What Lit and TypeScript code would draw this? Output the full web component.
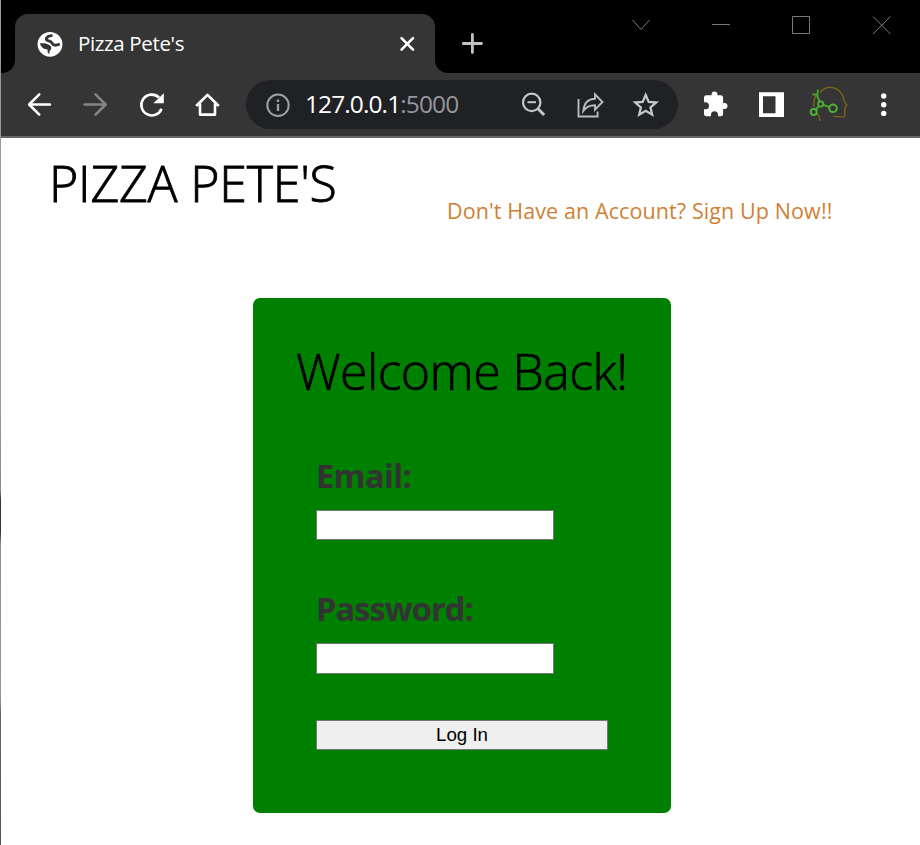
import { LitElement, html, css, svg } from "lit";
import { customElement, property, state } from "lit/decorators.js";

// Glyphs are drawn on a 56x48 tile centred on (28, 24).
const glyphs: Record<string, unknown> = {
  back: svg`<path d="M39 24.5H18.8M28.3 14.3 18.1 24.5 28.3 34.7" fill="none" stroke="#fff" stroke-width="2.5" stroke-linecap="round" stroke-linejoin="round"/>`,
  forward: svg`<path d="M17.5 24.5H38M28.5 14.3 38.7 24.5 28.5 34.7" fill="none" stroke="#858585" stroke-width="2.5" stroke-linecap="round" stroke-linejoin="round"/>`,
  reload: svg`<path d="M38.5 28.7A10.4 10.4 0 1 1 36 17.5" fill="none" stroke="#fff" stroke-width="2.6"/><path d="M40.8 13.2V23.3H30.4z" fill="#fff"/>`,
  home: svg`<path d="M17.2 26 28.5 14.8 39.8 26M21 23.5V34.6H36V23.5" fill="none" stroke="#fff" stroke-width="2.6" stroke-linejoin="round"/>`,
  zoomOut: svg`<circle cx="26.7" cy="21.4" r="8.7" fill="none" stroke="#c4c6c9" stroke-width="2.2"/><path d="M22.5 21.2H31" stroke="#c4c6c9" stroke-width="2"/><path d="M33 27.8 39.2 34" stroke="#c4c6c9" stroke-width="3"/>`,
  share: svg`<path d="M17.5 18V35.5H36.6V30.5" fill="none" stroke="#b9bbbf" stroke-width="1.9"/><path d="M22.3 30C23 22 27.6 17.9 34 17.7V13.3L41.5 21 34 28.6V24.2C28.5 24.2 25 26 22.3 30Z" fill="none" stroke="#b9bbbf" stroke-width="1.9" stroke-linejoin="miter"/>`,
  star: svg`<path d="M28.7 14 31.7 20.9 39.2 21.5 33.5 26.4 35.2 33.7 28.7 29.8 22.2 33.7 23.9 26.4 18.2 21.5 25.7 20.9Z" fill="none" stroke="#c4c6c9" stroke-width="2.3"/>`,
  puzzle: svg`<path transform="translate(.8 .3)" d="M36.8 22.8H35.3V17.3a2.4 2.4 0 0 0-2.4-2.4H29.6V14a2.9 2.9 0 0 0-5.8 0v.9H18.6a2.4 2.4 0 0 0-2.4 2.4v4.6h1.5a3.5 3.5 0 0 1 0 7H16.2v4.7a2.4 2.4 0 0 0 2.4 2.4h4.6V34.5a3.5 3.5 0 0 1 7 0V36h2.7a2.4 2.4 0 0 0 2.4-2.4V28.6h1.5a2.9 2.9 0 0 0 0-5.8Z" fill="#fff"/>`,
  panel: svg`<path d="M16 12.3H41V37H16ZM20 16.3V33.3H32.5V16.3Z" fill="#fff" fill-rule="evenodd"/>`,
  head: svg`<g fill="none"><path d="M21 12.5C27 5 38 5.5 43.5 15 44.8 17.5 44 19 45 20.5L47.8 25.3 45.8 27.5V35.5Q45.5 38 34.5 36.2M17 15.5C15 19 14.5 24 15.2 27M18 34C20.5 35.5 21 38 20.8 41" stroke="#7c6a18" stroke-width="1.3"/><path d="M17.5 14.5 21.7 24 34 28.3M21.7 24 14.7 32M13.5 14.2 18.5 15 18.9 9.5" stroke="#47a52f" stroke-width="1.9"/><circle cx="21.7" cy="24" r="2.6" fill="#353535" stroke="#4db433" stroke-width="1.7"/><circle cx="34" cy="28.3" r="3.8" fill="#353535" stroke="#4db433" stroke-width="2"/><circle cx="14.7" cy="32" r="3" fill="#353535" stroke="#4db433" stroke-width="1.9"/></g>`,
  dots: svg`<g fill="#fff"><circle cx="28.7" cy="16" r="2.7"/><circle cx="28.7" cy="24.7" r="2.7"/><circle cx="28.7" cy="33.4" r="2.7"/></g>`,
};

@customElement("tool-icon")
class ToolIcon extends LitElement {
  @property() name = "";
  static styles = css`
    :host { display: block; flex: none; width: 56px; height: 48px; }
    svg { display: block; overflow: visible; }
  `;
  render() {
    return html`<svg width="56" height="48" viewBox="0 0 56 48">${glyphs[this.name]}</svg>`;
  }
}

@customElement("browser-tabs")
class BrowserTabs extends LitElement {
  static styles = css`
    :host { display: flex; height: 73px; box-sizing: border-box; padding: 14px 0 0 15px; background: #000; font-family: "Open Sans", "Noto Sans", sans-serif; }
    .tab { position: relative; box-sizing: border-box; width: 420px; height: 59px; padding: 0 20px 0 22px; display: flex; align-items: center; background: #353535; border-radius: 13px 13px 0 0; }
    .tab::before, .tab::after { content: ""; position: absolute; bottom: 0; width: 13px; height: 13px; }
    .tab::before { left: -13px; background: radial-gradient(circle at 0 0, transparent 12.5px, #353535 13.5px); }
    .tab::after { right: -13px; background: radial-gradient(circle at 100% 0, transparent 12.5px, #353535 13.5px); }
    .title { flex: 1; margin: -2px 0 0 15px; color: #fff; font-size: 20.5px; line-height: 28px; letter-spacing: -0.35px; white-space: nowrap; }
    svg { display: block; flex: none; }
    .add { margin: 19px 0 0 27px; }
    .window { margin: 0 18px 0 auto; }
  `;
  render() {
    return html`
      <div class="tab">
        <svg width="26" height="26" viewBox="0 0 26 26">
          <circle cx="13" cy="13.3" r="12.4" fill="#fff" />
          <path d="M15.5 4.6C11.500 4.600 9 6.300 9.300 8.300S13.800 9.600 15.200 12.300 19.500 14.500 22.800 13" fill="none" stroke="#353535" stroke-width="2.900" />
          <path d="M3 12.300C6 12.300 8.500 12.300 10 13S14.800 14.500 14.300 17.300 12 18.800 12.500 22.800C11 22.800 10.500 21.500 10.500 18.500 7 18.500 3.500 16 3 12.300Z" fill="#353535" />
        </svg>
        <span class="title">Pizza Pete's</span>
        <svg width="16" height="16" viewBox="0 0 16 16"><path d="M2.5 2.2 14 13.7M14 2.2 2.5 13.7" stroke="#fff" stroke-width="2.6" stroke-linecap="round" /></svg>
      </div>
      <svg class="add" width="22" height="22" viewBox="0 0 22 22"><path d="M1.3 10.5H19.5M10.4 1.4V19.6" stroke="#c2c2c2" stroke-width="2.8" stroke-linecap="round" /></svg>
      <svg class="window" width="270" height="24" viewBox="632 14 270 24" fill="none" stroke="#7a7a7a" stroke-width="1">
        <path d="M632.5 20 641 29.5 649.5 20" />
        <path d="M712 24.5H730" />
        <path d="M792.5 16.5H809.5V33.5H792.5Z" />
        <path d="M873 16.5 890.5 34M890.5 16.5 873 34" />
      </svg>`;
  }
}

@customElement("browser-toolbar")
class BrowserToolbar extends LitElement {
  static styles = css`
    :host { display: flex; box-sizing: border-box; height: 65px; padding: 7px 9px 0 11px; background: #353535; border-bottom: 2px solid #666; font-family: "Open Sans", "Noto Sans", sans-serif; }
    .group { display: flex; height: 48px; }
    .address { flex: none; display: flex; align-items: center; box-sizing: border-box; width: 432px; height: 49px; margin: 0 9px 0 11px; padding: 0 5px 0 20px; background: #202124; border-radius: 24.5px; }
    .info { flex: none; }
    .url { flex: 1; margin: -2px 0 0 15px; font-size: 24.5px; line-height: 34px; letter-spacing: -0.9px; color: #fff; white-space: nowrap; }
    .port { color: #93969a; }
  `;
  render() {
    return html`
      <div class="group">${["back", "forward", "reload", "home"].map((n) => html`<tool-icon name=${n}></tool-icon>`)}</div>
      <div class="address">
        <svg class="info" width="24" height="24" viewBox="0 0 24 24"><circle cx="12" cy="12.3" r="10.7" fill="none" stroke="#9aa0a6" stroke-width="2" /><path d="M12 11V18M12 6.5V9" stroke="#9aa0a6" stroke-width="2.3" /></svg>
        <span class="url">127.0.0.1<span class="port">:5000</span></span>
        ${["zoomOut", "share", "star"].map((n) => html`<tool-icon name=${n}></tool-icon>`)}
      </div>
      <div class="group">${["puzzle", "panel", "head", "dots"].map((n) => html`<tool-icon name=${n}></tool-icon>`)}</div>`;
  }
}

@customElement("login-card")
class LoginCard extends LitElement {
  @state() private fields = [
    { label: "Email:", type: "email", cls: "email" },
    { label: "Password:", type: "password", cls: "password" },
  ];
  static styles = css`
    :host { display: block; box-sizing: border-box; width: 418px; height: 515px; padding: 39px 0 0; background: #008000; border-radius: 7px; font-family: "Open Sans", "Noto Sans", sans-serif; }
    h2 { margin: 0; padding-left: 43px; font-size: 50px; line-height: 68px; font-weight: 300; letter-spacing: -0.57px; -webkit-text-stroke: 0.7px #000; color: #000; white-space: nowrap; }
    form { display: flex; flex-direction: column; align-items: flex-start; padding: 49px 63px 0; }
    label { display: block; height: 44px; margin-bottom: 12px; font-size: 32.5px; line-height: 44px; font-weight: 700; color: #333; white-space: nowrap; }
    .email-label { letter-spacing: -0.6px; }
    .password-label { letter-spacing: -0.9px; }
    input { box-sizing: border-box; width: 238px; height: 30px; margin: 0 0 47px; padding: 1px 3px; border: 1px solid #767676; border-radius: 0; background: #fff; outline: none; }
    .password { height: 31px; margin-bottom: 46px; }
    button { box-sizing: border-box; width: 292px; height: 30px; padding: 0; border: 1px solid #767676; border-radius: 1px; background: #efefef; color: #000; font: 18.7px/28px "Liberation Sans", Arial, sans-serif; }
  `;
  render() {
    return html`
      <h2>Welcome Back!</h2>
      <form>
        ${this.fields.map((f) => html`<label class="${f.cls}-label" for=${f.cls}>${f.label}</label><input class=${f.cls} id=${f.cls} type=${f.type} />`)}
        <button type="button">Log In</button>
      </form>`;
  }
}

@customElement("app-root")
class AppRoot extends LitElement {
  static styles = css`
    :host { display: flex; width: 920px; height: 845px; overflow: hidden; background: #fff; font-family: "Open Sans", "Noto Sans", sans-serif; }
    .edge { position: relative; z-index: 1; flex: none; width: 1px; background: linear-gradient(#999 0, #999 400px, #858c96 490px, #333 500px, #333 532px, #8b9292 545px, #8d979e 700px, #666 712px, #575250 845px); }
    .window { flex: none; width: 920px; margin-left: -1px; }
    header { display: flex; height: 160px; padding-left: 49px; }
    h1 { flex: none; width: 398px; margin: 11px 0 0; font-size: 50px; line-height: 68px; font-weight: 300; letter-spacing: -0.2px; -webkit-text-stroke: 0.9px #000; color: #000; white-space: nowrap; }
    a { margin-top: 58px; font-size: 21.5px; line-height: 30px; letter-spacing: 0.1px; color: #d08033; text-decoration: none; white-space: nowrap; }
    main { padding-left: 253px; }
  `;
  render() {
    return html`
      <div class="edge"></div>
      <div class="window">
        <browser-tabs></browser-tabs>
        <browser-toolbar></browser-toolbar>
        <header>
          <h1>PIZZA PETE'S</h1>
          <a>Don't Have an Account? Sign Up Now!!</a>
        </header>
        <main><login-card></login-card></main>
      </div>`;
  }
}
